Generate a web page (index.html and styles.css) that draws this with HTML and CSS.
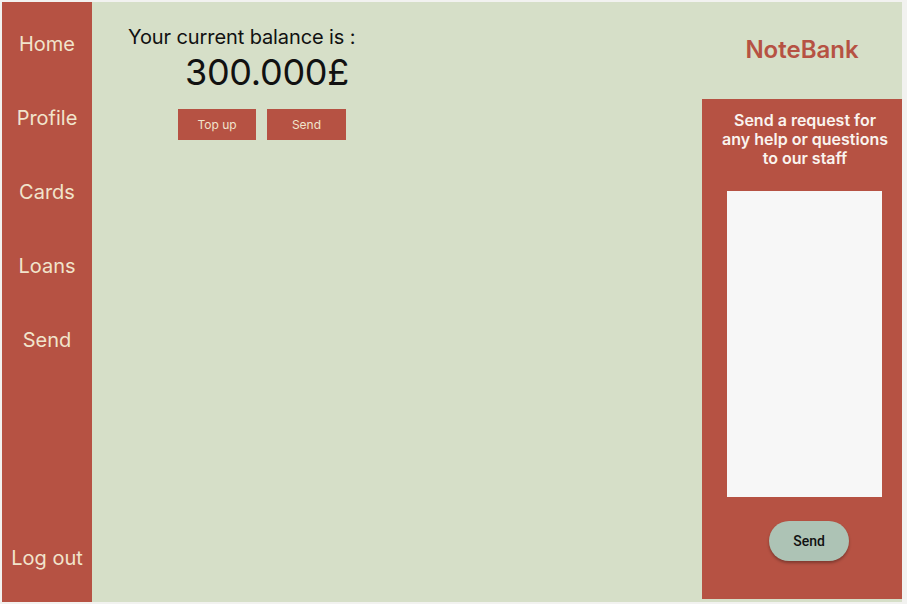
FILE: index.html
```html
<!DOCTYPE html>
<html>
<head>
<meta charset="utf-8">
<link rel="stylesheet" href="styles.css">
</head>
<body>
<div class="app">
  <nav class="sidebar">
    <ul class="nav">
      <li>Home</li>
      <li>Profile</li>
      <li>Cards</li>
      <li>Loans</li>
      <li>Send</li>
    </ul>
    <div class="logout">Log out</div>
  </nav>
  <main class="main">
    <section class="balance">
      <div class="balance-label">Your current balance is :</div>
      <div class="balance-amount">300.000£</div>
      <div class="actions">
        <button class="btn btn-topup">Top up</button>
        <button class="btn btn-send">Send</button>
      </div>
    </section>
    <aside class="side">
      <div class="brand">NoteBank</div>
      <div class="help">
        <p class="help-text">Send a request for any help or questions to our staff</p>
        <textarea class="help-input"></textarea>
        <button class="pill">Send</button>
      </div>
    </aside>
  </main>
</div>
</body>
</html>
```
FILE: styles.css
```css
* { box-sizing: border-box; }
html, body { margin: 0; padding: 0; }
body {
  background: #f2f2f0;
  font-family: Inter, "Noto Sans", sans-serif;
  width: 907px;
  height: 604px;
  overflow: hidden;
}
.app {
  display: flex;
  margin: 2px 0 0 2px;
  width: 900px;
  height: 600px;
}
.sidebar {
  width: 90px;
  background: #b65243;
  display: flex;
  flex-direction: column;
  color: #f1e4cc;
  text-align: center;
  font-size: 20px;
}
.nav {
  list-style: none;
  margin: 0;
  padding: 28px 0 0 0;
  display: flex;
  flex-direction: column;
  gap: 46px;
}
.nav li { line-height: 28px; }
.logout {
  margin-top: auto;
  line-height: 28px;
  padding-bottom: 30px;
}
.main {
  flex: 1;
  background: #d6dfc8;
  display: flex;
}
.balance {
  flex: 1;
  padding: 23px 0 0 36px;
}
.balance-label {
  font-size: 20px;
  line-height: 24px;
  color: #111;
  letter-spacing: -0.1px;
}
.balance-amount {
  font-size: 36px;
  line-height: 44px;
  margin: 1px 0 0 57px;
  color: #111;
  letter-spacing: -0.3px;
}
.actions {
  display: flex;
  gap: 11px;
  margin: 15px 0 0 50px;
}
.btn {
  border: none;
  background: #b65243;
  color: #f1e4cc;
  font-family: inherit;
  font-size: 12px;
  height: 31px;
  padding: 0;
}
.btn-topup { width: 78px; }
.btn-send { width: 79px; }
.side {
  width: 200px;
  display: flex;
  flex-direction: column;
}
.brand {
  height: 97px;
  padding-top: 33px;
  text-align: center;
  font-size: 24px;
  font-weight: 600;
  color: #b65243;
  line-height: 30px;
}
.help {
  height: 500px;
  background: #b65243;
  display: flex;
  flex-direction: column;
  align-items: center;
}
.help-text {
  margin: 12px 0 0 6px;
  width: 172px;
  color: #faf4ef;
  font-weight: 600;
  font-size: 16px;
  line-height: 19px;
  text-align: center;
}
.help-input {
  margin-top: 23px;
  width: 155px;
  height: 306px;
  border: none;
  background: #f7f7f7;
  resize: none;
  margin-left: 5px;
}
.pill {
  margin-top: 24px;
  margin-left: 14px;
  width: 80px;
  height: 40px;
  border: none;
  border-radius: 20px;
  background: #adc3b5;
  font-family: Roboto, "Noto Sans", sans-serif;
  font-weight: 500;
  font-size: 14px;
  color: #111;
  box-shadow: 0 2px 3px rgba(0,0,0,0.3);
}
```
